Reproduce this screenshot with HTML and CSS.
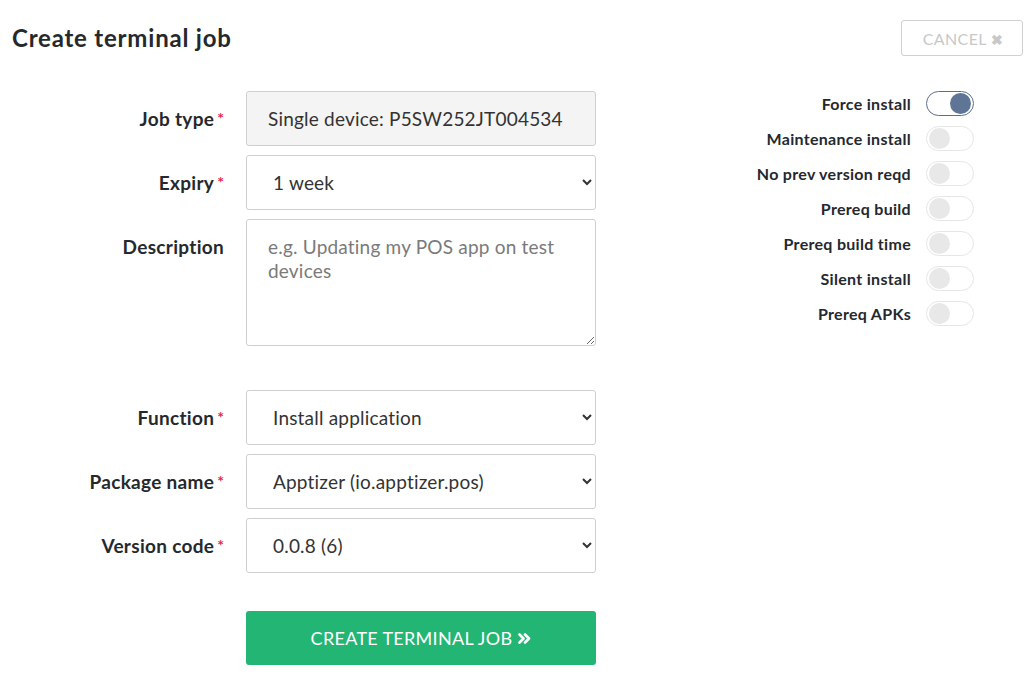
FILE: index.html
```html
<!DOCTYPE html>
<html>
<head>
<meta charset="utf-8">
<link rel="stylesheet" href="styles.css">
</head>
<body>
<div class="page">
  <div class="header">
    <h1 class="title">Create terminal job</h1>
    <button class="cancel">CANCEL <span class="x">&#10006;</span></button>
  </div>
  <div class="main">
    <div class="form">
      <div class="row">
        <label class="label">Job type<span class="req">*</span></label>
        <input class="field readonly" type="text" value="Single device: P5SW252JT004534" readonly>
      </div>
      <div class="row">
        <label class="label">Expiry<span class="req">*</span></label>
        <select class="field select"><option>1 week</option></select>
      </div>
      <div class="row top">
        <label class="label desc">Description</label>
        <textarea class="field area" placeholder="e.g. Updating my POS app on test devices"></textarea>
      </div>
      <div class="row spaced">
        <label class="label">Function<span class="req">*</span></label>
        <select class="field select"><option>Install application</option></select>
      </div>
      <div class="row">
        <label class="label">Package name<span class="req">*</span></label>
        <select class="field select"><option>Apptizer (io.apptizer.pos)</option></select>
      </div>
      <div class="row">
        <label class="label">Version code<span class="req">*</span></label>
        <select class="field select"><option>0.0.8 (6)</option></select>
      </div>
      <div class="row submit-row">
        <span class="label"></span>
        <button class="submit">CREATE TERMINAL JOB <svg class="chev" width="13" height="11" viewBox="0 0 13 11"><path d="M1.5 1.5 L5.5 5.5 L1.5 9.5 M7 1.5 L11 5.5 L7 9.5" fill="none" stroke="#fff" stroke-width="2.6" stroke-linecap="round" stroke-linejoin="round"/></svg></button>
      </div>
    </div>
    <div class="toggles">
      <div class="trow"><span class="tlabel">Force install</span><span class="toggle on"><span class="knob"></span></span></div>
      <div class="trow"><span class="tlabel">Maintenance install</span><span class="toggle"><span class="knob"></span></span></div>
      <div class="trow"><span class="tlabel">No prev version reqd</span><span class="toggle"><span class="knob"></span></span></div>
      <div class="trow"><span class="tlabel">Prereq build</span><span class="toggle"><span class="knob"></span></span></div>
      <div class="trow"><span class="tlabel">Prereq build time</span><span class="toggle"><span class="knob"></span></span></div>
      <div class="trow"><span class="tlabel">Silent install</span><span class="toggle"><span class="knob"></span></span></div>
      <div class="trow"><span class="tlabel">Prereq APKs</span><span class="toggle"><span class="knob"></span></span></div>
    </div>
  </div>
</div>
</body>
</html>
```
FILE: styles.css
```css
* { box-sizing: border-box; }
html, body { margin: 0; padding: 0; background: #fff; }
body { font-family: "Lato", "Liberation Sans", sans-serif; color: #2b2f33; }
.page { width: 1027px; height: 682px; overflow: hidden; }
.header { display: flex; justify-content: space-between; align-items: flex-start; padding: 20px 4px 0 12px; height: 91px; }
.title { margin: 3px 0 0 0; font-size: 24px; font-weight: 700; color: #25292d; letter-spacing: 0.8px; }
.cancel { width: 122px; height: 36px; border: 1px solid #d0d0d0; border-radius: 3px; background: #fff; color: #c8c8c8; font-family: "Lato", sans-serif; font-size: 16px; letter-spacing: 0.4px; padding: 0 0 0 2px; }
.cancel .x { font-size: 14px; font-weight: 900; }
.main { display: flex; }
.form { display: flex; flex-direction: column; gap: 9px; width: 596px; }
.row { display: flex; align-items: center; gap: 22px; }
.row.top { align-items: flex-start; }
.row.spaced { margin-top: 35px; }
.row.submit-row { margin-top: 29px; }
.label { width: 224px; text-align: right; font-weight: 700; font-size: 19px; color: #25292d; letter-spacing: 0.3px; }
.label.desc { margin-top: 16px; }
.req { color: #e8244f; font-size: 16px; margin-left: 3px; vertical-align: 2px; font-weight: 700; letter-spacing: 0; }
.field { width: 350px; height: 55px; border: 1px solid #cfcfcf; border-radius: 3px; font-family: "Lato", sans-serif; font-size: 19px; letter-spacing: 0.2px; color: #333; background: #fff; padding: 0 21px; }
.field.readonly { background: #f4f4f4; outline: none; }
.field.select { padding-left: 22px; padding-right: 10px; }
.field.area { height: 127px; padding: 15px 21px; resize: vertical; line-height: 24px; }
.field.area::placeholder { color: #7a7a7a; }
.submit { width: 350px; height: 54px; border: none; border-radius: 3px; background: #23b574; color: #fff; font-family: "Lato", sans-serif; font-size: 18px; padding: 0; letter-spacing: 0.3px; display: flex; align-items: center; justify-content: center; gap: 6px; }
.submit .chev { display: block; margin-top: 1px; }
.toggles { display: flex; flex-direction: column; gap: 11px; margin-left: auto; margin-right: 53px; }
.trow { display: flex; justify-content: flex-end; align-items: center; gap: 15px; height: 24px; }
.tlabel { font-weight: 700; font-size: 16px; color: #25292d; letter-spacing: 0.3px; }
.toggle { width: 48px; height: 25px; border: 1px solid #e6e6e6; border-radius: 13px; background: #fff; display: flex; align-items: center; padding: 0 2px; }
.knob { width: 21px; height: 21px; border-radius: 50%; background: #e8e8e8; }
.toggle.on { border-color: #5b6f8c; justify-content: flex-end; }
.toggle.on .knob { background: #5f7595; }
```
